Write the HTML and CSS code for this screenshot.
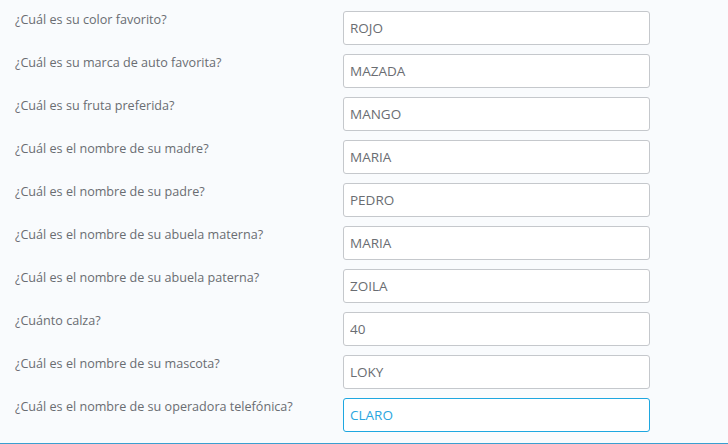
FILE: index.html
```html
<!DOCTYPE html>
<html lang="es">
<head>
<meta charset="utf-8">
<link rel="stylesheet" href="styles.css">
</head>
<body>
<form class="form">
  <div class="row"><label class="label">¿Cuál es su color favorito?</label><input class="field" type="text" value="ROJO"></div>
  <div class="row"><label class="label">¿Cuál es su marca de auto favorita?</label><input class="field" type="text" value="MAZADA"></div>
  <div class="row"><label class="label">¿Cuál es su fruta preferida?</label><input class="field" type="text" value="MANGO"></div>
  <div class="row"><label class="label">¿Cuál es el nombre de su madre?</label><input class="field" type="text" value="MARIA"></div>
  <div class="row"><label class="label">¿Cuál es el nombre de su padre?</label><input class="field" type="text" value="PEDRO"></div>
  <div class="row"><label class="label">¿Cuál es el nombre de su abuela materna?</label><input class="field" type="text" value="MARIA"></div>
  <div class="row"><label class="label">¿Cuál es el nombre de su abuela paterna?</label><input class="field" type="text" value="ZOILA"></div>
  <div class="row"><label class="label">¿Cuánto calza?</label><input class="field" type="text" value="40"></div>
  <div class="row"><label class="label">¿Cuál es el nombre de su mascota?</label><input class="field" type="text" value="LOKY"></div>
  <div class="row"><label class="label">¿Cuál es el nombre de su operadora telefónica?</label><input class="field field-active" type="text" value="CLARO"></div>
</form>
</body>
</html>
```
FILE: styles.css
```css
html, body {
  margin: 0;
  padding: 0;
  background: #f9fbfd;
}
body {
  font-family: "Open Sans", "Noto Sans", sans-serif;
  height: 444px;
  overflow: hidden;
}
.form {
  display: flex;
  flex-direction: column;
  gap: 9px;
  padding: 11px 0 11px 15px;
  border-bottom: 2px solid #3a9fd0;
}
.row {
  display: grid;
  grid-template-columns: 328px 307px;
  align-items: start;
}
.label {
  font-size: 12.6px;
  color: #6a6d72;
  line-height: 16px;
  padding-top: 1px;
}
.field {
  box-sizing: border-box;
  height: 34px;
  width: 307px;
  margin: 0;
  padding: 0 6px;
  border: 1px solid #c5c8cc;
  border-radius: 3px;
  background: #fff;
  font-family: "Open Sans", "Noto Sans", sans-serif;
  font-size: 13.5px;
  color: #6a6d72;
  outline: none;
}
.field-active {
  border-color: #1ea7e0;
  color: #2aa6e0;
}
```
